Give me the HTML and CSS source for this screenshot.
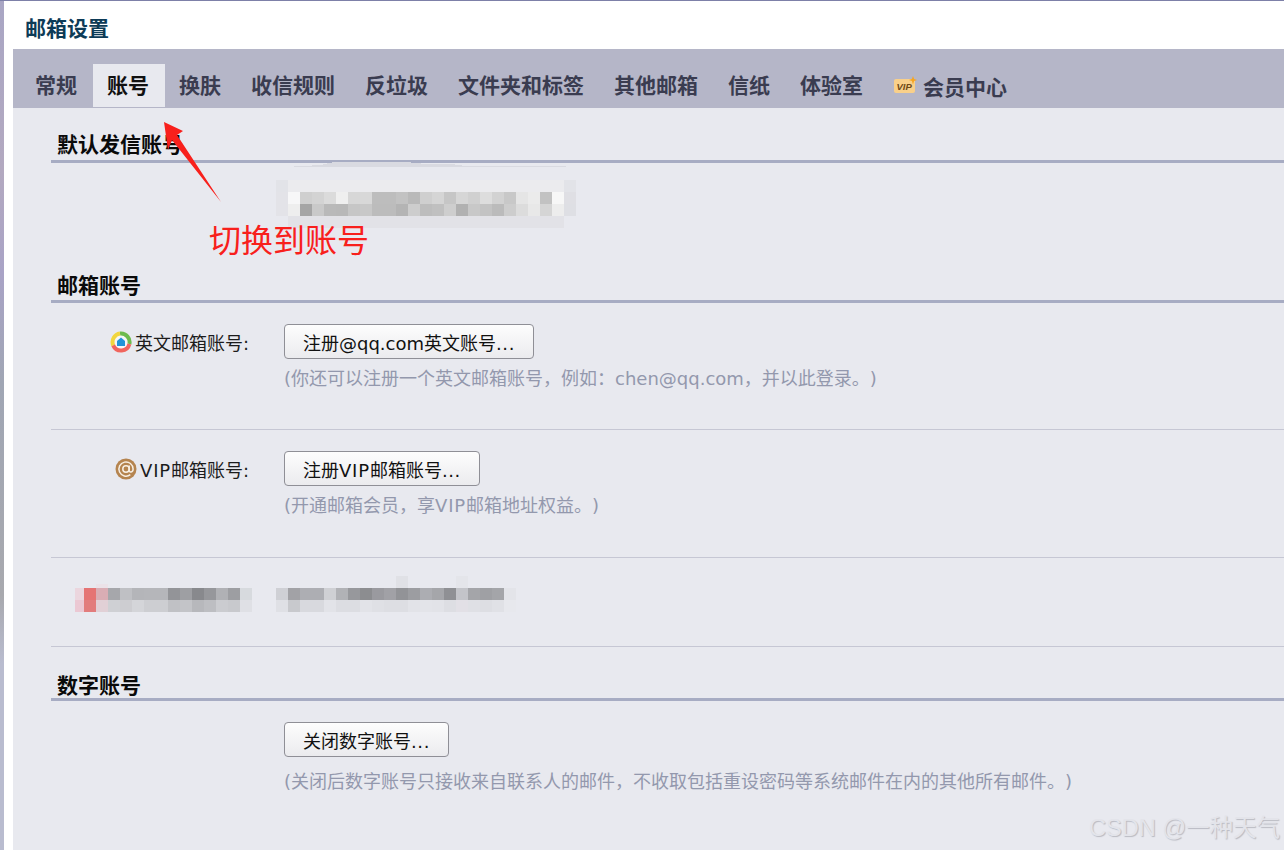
FILE: index.html
```html
<!DOCTYPE html>
<html lang="zh-CN">
<head>
<meta charset="utf-8">
<title>邮箱设置</title>
<link rel="stylesheet" href="styles.css">
</head>
<body>
<div class="edge"></div>
<main class="window">
  <header class="title">邮箱设置</header>
  <div class="panel">
    <nav class="tabs">
      <a class="tab">常规</a>
      <a class="tab active">账号</a>
      <a class="tab">换肤</a>
      <a class="tab">收信规则</a>
      <a class="tab">反垃圾</a>
      <a class="tab">文件夹和标签</a>
      <a class="tab">其他邮箱</a>
      <a class="tab">信纸</a>
      <a class="tab">体验室</a>
      <a class="tab tab-vip">
        <svg class="vip-badge" width="23" height="18" viewBox="0 0 23 18">
          <rect x="0" y="3" width="21" height="14" rx="2" fill="#f9d08a"/>
          <text x="2.5" y="14" class="vip-text">VIP</text>
          <path d="M19 0l1.1 3 2.9 1-2.9 1-1.1 3.4-1.1-3.4-3-1 3-1z" fill="#f5a524"/>
        </svg>
        <span class="vip-label">会员中心</span>
      </a>
    </nav>

    <div class="content">
      <section class="section-first">
        <h2 class="heading">默认发信账号</h2>
        <svg class="mosaic mosaic-top" width="300" height="66" viewBox="0 0 300 66">
          <polygon points="9,5 45,3 58,0 130,0 150,2 175,2 190,4 290,4 290,5" fill="#d9dae1"/>
          <rect class="strip" x="12" y="18" fill="#ebebee"/>
          <rect x="0" y="18" fill="#e2e3e8"/>
          <rect x="288" y="18" fill="#e2e3e8"/>
          <rect class="strip" x="12" y="54" fill="#e2e2e7"/>
          <rect x="0" y="30" fill="#e3e3e8"/><rect x="12" y="30" fill="#f7f7f8"/><rect x="24" y="30" fill="#cfcfcf"/><rect x="36" y="30" fill="#d3d3d3"/><rect x="48" y="30" fill="#dbdbdb"/><rect x="60" y="30" fill="#efefef"/><rect x="72" y="30" fill="#d7d7d7"/><rect x="84" y="30" fill="#d8d8d8"/><rect x="96" y="30" fill="#bdbdbd"/><rect x="108" y="30" fill="#bdbdbd"/><rect x="120" y="30" fill="#c2c2c2"/><rect x="132" y="30" fill="#b9b9b9"/><rect x="144" y="30" fill="#cfcfcf"/><rect x="156" y="30" fill="#d5d5d5"/><rect x="168" y="30" fill="#c6c6c6"/><rect x="180" y="30" fill="#d6d6d6"/><rect x="192" y="30" fill="#d0d0d0"/><rect x="204" y="30" fill="#dddddd"/><rect x="216" y="30" fill="#d2d2d2"/><rect x="228" y="30" fill="#c8c8c8"/><rect x="240" y="30" fill="#e5e5e5"/><rect x="252" y="30" fill="#ebebeb"/><rect x="264" y="30" fill="#c2c2c2"/><rect x="276" y="30" fill="#f7f7f7"/><rect x="288" y="30" fill="#dfdfe4"/>
          <rect x="0" y="42" fill="#e3e3e8"/><rect x="12" y="42" fill="#eeeeee"/><rect x="24" y="42" fill="#a5a5a5"/><rect x="36" y="42" fill="#c9c9c9"/><rect x="48" y="42" fill="#b9b9b9"/><rect x="60" y="42" fill="#b8b8b8"/><rect x="72" y="42" fill="#c6c6c6"/><rect x="84" y="42" fill="#c8c8c8"/><rect x="96" y="42" fill="#bcbcbc"/><rect x="108" y="42" fill="#bcbcbc"/><rect x="120" y="42" fill="#b4b4b4"/><rect x="132" y="42" fill="#cdcdcd"/><rect x="144" y="42" fill="#bdbdbd"/><rect x="156" y="42" fill="#c0c0c0"/><rect x="168" y="42" fill="#cecece"/><rect x="180" y="42" fill="#b1b1b1"/><rect x="192" y="42" fill="#c8c8c8"/><rect x="204" y="42" fill="#c3c3c3"/><rect x="216" y="42" fill="#bbbbbb"/><rect x="228" y="42" fill="#cdcdcd"/><rect x="240" y="42" fill="#dcdcdc"/><rect x="252" y="42" fill="#e8e8e8"/><rect x="264" y="42" fill="#d5d5d5"/><rect x="276" y="42" fill="#ededed"/><rect x="288" y="42" fill="#dedfe4"/>
        </svg>
      </section>

      <section class="section-mail">
        <h2 class="heading">邮箱账号</h2>
        <div class="form-row">
          <div class="label">
            <svg class="label-icon" width="22" height="22" viewBox="0 0 22 22">
              <circle cx="11" cy="11" r="10.5" fill="#f6f6f6"/>
              <path d="M10 2.6A8.6 8.6 0 0 1 19.4 13" fill="none" stroke="#6dbb4d" stroke-width="4"/>
              <path d="M3.2 14.4A8.6 8.6 0 0 1 10 2.6" fill="none" stroke="#f1d63f" stroke-width="4"/>
              <path d="M19.4 13A8.6 8.6 0 0 1 3.2 14.4" fill="none" stroke="#f0655e" stroke-width="4"/>
              <path d="M11 6.4l4 3.6v5H7v-5z" fill="#1f94d8"/>
            </svg>
            <span>英文邮箱账号<span class="colon">:</span></span>
          </div>
          <div class="field">
            <button class="btn" type="button">注册@qq.com英文账号<span class="dots">...</span></button>
            <p class="help">(你还可以注册一个英文邮箱账号，例如：chen@qq.com，并以此登录。)</p>
          </div>
        </div>
        <div class="form-row">
          <div class="label">
            <svg class="label-icon" width="22" height="22" viewBox="0 0 22 22">
              <circle cx="11" cy="11" r="10.5" fill="#b5844f"/>
              <circle cx="11" cy="11" r="3.2" fill="none" stroke="#f7efe4" stroke-width="1.5"/>
              <path d="M14.2 7.6v4.6c0 2.6 3.9 2.4 3.9-1.2a7.1 7.1 0 1 0-2.8 5.7" fill="none" stroke="#f7efe4" stroke-width="1.5"/>
            </svg>
            <span><span class="vip">VIP</span>邮箱账号<span class="colon">:</span></span>
          </div>
          <div class="field">
            <button class="btn" type="button">注册<span class="vip">VIP</span>邮箱账号<span class="dots">...</span></button>
            <p class="help">(开通邮箱会员，享<span class="vip">VIP</span>邮箱地址权益。)</p>
          </div>
        </div>
        <div class="blur-row">
          <svg class="mosaic" width="177" height="36" viewBox="0 0 177 36">
            <rect x="21" y="8" fill="#ebe2e8"/>
            <g transform="translate(0 12)">
              <rect x="-3" y="0" fill="#ebd6de"/><rect x="9" y="0" fill="#e57474"/><rect x="21" y="0" fill="#d9adb4"/><rect x="33" y="0" fill="#a6a7ab"/><rect x="45" y="0" fill="#bfc0c4"/><rect x="57" y="0" fill="#b4b5b9"/><rect x="69" y="0" fill="#b5b6ba"/><rect x="81" y="0" fill="#b5b6ba"/><rect x="93" y="0" fill="#939498"/><rect x="105" y="0" fill="#9e9fa3"/><rect x="117" y="0" fill="#88898d"/><rect x="129" y="0" fill="#96979b"/><rect x="141" y="0" fill="#b0b1b5"/><rect x="153" y="0" fill="#9d9ea2"/><rect x="165" y="0" fill="#d7dade"/>
              <rect x="-3" y="12" fill="#ebc8d3"/><rect x="9" y="12" fill="#e27c7c"/><rect x="21" y="12" fill="#e1d0d6"/><rect x="33" y="12" fill="#cfd0d4"/><rect x="45" y="12" fill="#cdcdd1"/><rect x="57" y="12" fill="#d4d5d9"/><rect x="69" y="12" fill="#cdced2"/><rect x="81" y="12" fill="#cdced2"/><rect x="93" y="12" fill="#c0c1c5"/><rect x="105" y="12" fill="#c3c4c8"/><rect x="117" y="12" fill="#b7b8bc"/><rect x="129" y="12" fill="#bdbec2"/><rect x="141" y="12" fill="#cbccd0"/><rect x="153" y="12" fill="#c8c9cd"/><rect x="165" y="12" fill="#dfe0e5"/>
            </g>
          </svg>
          <svg class="mosaic" width="240" height="36" viewBox="0 0 240 36">
            <rect x="120" y="0" fill="#e0e1e6"/><rect x="180" y="0" fill="#e4e5ea"/>
            <rect x="0" y="12" fill="#cfd0d5"/><rect x="12" y="12" fill="#a2a2a6"/><rect x="24" y="12" fill="#adaeb3"/><rect x="36" y="12" fill="#adaeb3"/><rect x="48" y="12" fill="#cfd0d4"/><rect x="60" y="12" fill="#b1b2b6"/><rect x="72" y="12" fill="#97989c"/><rect x="84" y="12" fill="#8c8d90"/><rect x="96" y="12" fill="#9a9a9f"/><rect x="108" y="12" fill="#a1a1a6"/><rect x="120" y="12" fill="#929397"/><rect x="132" y="12" fill="#9c9da1"/><rect x="144" y="12" fill="#acadb2"/><rect x="156" y="12" fill="#a5a6aa"/><rect x="168" y="12" fill="#8f9094"/><rect x="180" y="12" fill="#c3c4c9"/><rect x="192" y="12" fill="#a4a5a9"/><rect x="204" y="12" fill="#9fa0a4"/><rect x="216" y="12" fill="#a4a5a9"/><rect x="228" y="12" fill="#e3e4e9"/>
            <rect x="0" y="24" fill="#dfe0e5"/><rect x="12" y="24" fill="#c8c9cd"/><rect x="24" y="24" fill="#d8d9de"/><rect x="36" y="24" fill="#d8d9de"/><rect x="48" y="24" fill="#e2e3e8"/><rect x="60" y="24" fill="#dcdde2"/><rect x="72" y="24" fill="#dcdde2"/><rect x="84" y="24" fill="#e2e3e8"/><rect x="96" y="24" fill="#dfe0e5"/><rect x="108" y="24" fill="#dddee3"/><rect x="120" y="24" fill="#dddee3"/><rect x="132" y="24" fill="#e2e3e8"/><rect x="144" y="24" fill="#e3e4e9"/><rect x="156" y="24" fill="#e2e3e8"/><rect x="168" y="24" fill="#dddee3"/><rect x="180" y="24" fill="#e2e0e6"/><rect x="192" y="24" fill="#dfe0e5"/><rect x="204" y="24" fill="#dddee3"/><rect x="216" y="24" fill="#e0e1e6"/><rect x="228" y="24" fill="#e7e8ed"/>
          </svg>
        </div>
      </section>

      <section class="section-digital">
        <h2 class="heading">数字账号</h2>
        <div class="form-row form-row-plain">
          <div class="label"></div>
          <div class="field">
            <button class="btn" type="button">关闭数字账号<span class="dots">...</span></button>
            <p class="help help-wide">(关闭后数字账号只接收来自联系人的邮件，不收取包括重设密码等系统邮件在内的其他所有邮件。)</p>
          </div>
        </div>
      </section>
    </div>
  </div>
</main>

<svg class="arrow" width="70" height="90" viewBox="160 118 70 90">
  <polygon points="164,122 183,131 177,135 221,202 172,140 168,150" fill="#f8201c"/>
</svg>
<div class="note">切换到账号</div>
<div class="watermark">CSDN @一种天气</div>
</body>
</html>
```
FILE: styles.css
```css
* { box-sizing: border-box; }

html, body {
  margin: 0;
  height: 850px;
  overflow: hidden;
}

body {
  position: relative;
  display: flex;
  background: #fff;
  font-family: "DejaVu Sans", "Noto Sans CJK SC", sans-serif;
  font-size: 18px;
  color: #1c1c1c;
  text-spacing-trim: space-all;
  border-top: 1px solid #7d80a8;
}

.edge {
  flex: 0 0 4px;
  background: linear-gradient(#a9a6c4 0, #b3a9c0 20%, #a9a3c6 32%, #a0a6b4 45%, #a8a9ae 70%, #b9bccf 78%, #b9bccf 100%);
}

.window {
  flex: 1;
  min-width: 0;
  padding-left: 9px;
  display: flex;
  flex-direction: column;
}

.title {
  height: 48px;
  padding: 4px 0 0 12px;
  display: flex;
  align-items: center;
  font-size: 21px;
  font-weight: 700;
  color: #0d3b57;
}

.panel {
  flex: 1;
  display: flex;
  flex-direction: column;
  background: #e8e9ef;
}

.tabs {
  height: 59px;
  padding: 15px 0 1px 8px;
  display: flex;
  background: #b5b6c8;
}

.tab {
  padding: 0 16px 4px 14px;
  display: flex;
  align-items: center;
  font-size: 21px;
  font-weight: 700;
  color: #3a3c50;
  white-space: nowrap;
}

.tab.active {
  background: #e8e9ef;
  color: #111;
}

.tab-vip { gap: 6px; }

.vip-label { padding-top: 5px; }

.vip-badge {
  margin: 2px 0 0 1px;
}

.vip-text {
  font-family: "Liberation Sans", sans-serif;
  font-size: 9.5px;
  font-weight: 700;
  font-style: italic;
  fill: #6f4a17;
}

.content {
  flex: 1;
  padding-left: 38px;
}

.heading {
  margin: 0;
  height: 33px;
  padding-left: 6px;
  font-size: 21px;
  font-weight: 700;
  line-height: 30px;
  color: #0a0a0a;
  border-bottom: 3px solid #a7acc3;
}

.section-first { padding-top: 22px; }

.mosaic {
  display: block;
  flex: none;
  shape-rendering: crispEdges;
  overflow: hidden;
}

.mosaic rect {
  width: 12px;
  height: 12px;
}

.mosaic rect.strip {
  width: 276px;
}

.mosaic-top { margin: -1px 0 0 225px; }

.section-mail { padding-top: 42px; }

.section-mail .heading { padding-top: 1px; }

.form-row {
  height: 127px;
  padding-top: 21px;
  display: grid;
  grid-template-columns: 233px 1fr;
  border-bottom: 1px solid #c6c7d4;
}

.form-row + .form-row { height: 128px; }

.form-row-plain {
  border-bottom: 0;
  height: auto;
}

.label {
  height: 35px;
  padding-right: 33px;
  display: flex;
  align-items: center;
  justify-content: flex-end;
  gap: 3px;
  white-space: nowrap;
}

.label-icon { flex: none; }

.colon { letter-spacing: 2px; }

.vip { letter-spacing: .8px; }

.dots { letter-spacing: .6px; }

.btn {
  display: block;
  height: 35px;
  padding: 0 18px;
  font: inherit;
  color: #111;
  white-space: nowrap;
  background: linear-gradient(#fdfdfd, #ebebee);
  border: 1px solid #8f8f96;
  border-radius: 4px;
}

.help {
  margin: 8px 0 0;
  line-height: 24px;
  color: #9398ad;
  white-space: nowrap;
}

.help-wide { margin-top: 13px; }

.blur-row {
  height: 89px;
  padding: 18px 0 0 24px;
  display: flex;
  gap: 24px;
  border-bottom: 1px solid #c6c7d4;
}

.section-digital { padding-top: 21px; }

.section-digital .heading { padding-top: 3px; }

.arrow {
  position: absolute;
  left: 160px;
  top: 117px;
}

.note {
  position: absolute;
  left: 209px;
  top: 214px;
  font-family: "Noto Sans CJK SC", sans-serif;
  font-size: 32px;
  line-height: 46px;
  color: #f8201c;
  white-space: nowrap;
}

.watermark {
  position: absolute;
  right: 4px;
  top: 812px;
  font-family: "Liberation Sans", "Noto Sans CJK SC", sans-serif;
  font-size: 23.5px;
  line-height: 30px;
  color: #e3e4ea;
  text-shadow: 1px 1px 1px #b9bac2;
  white-space: nowrap;
}
```
